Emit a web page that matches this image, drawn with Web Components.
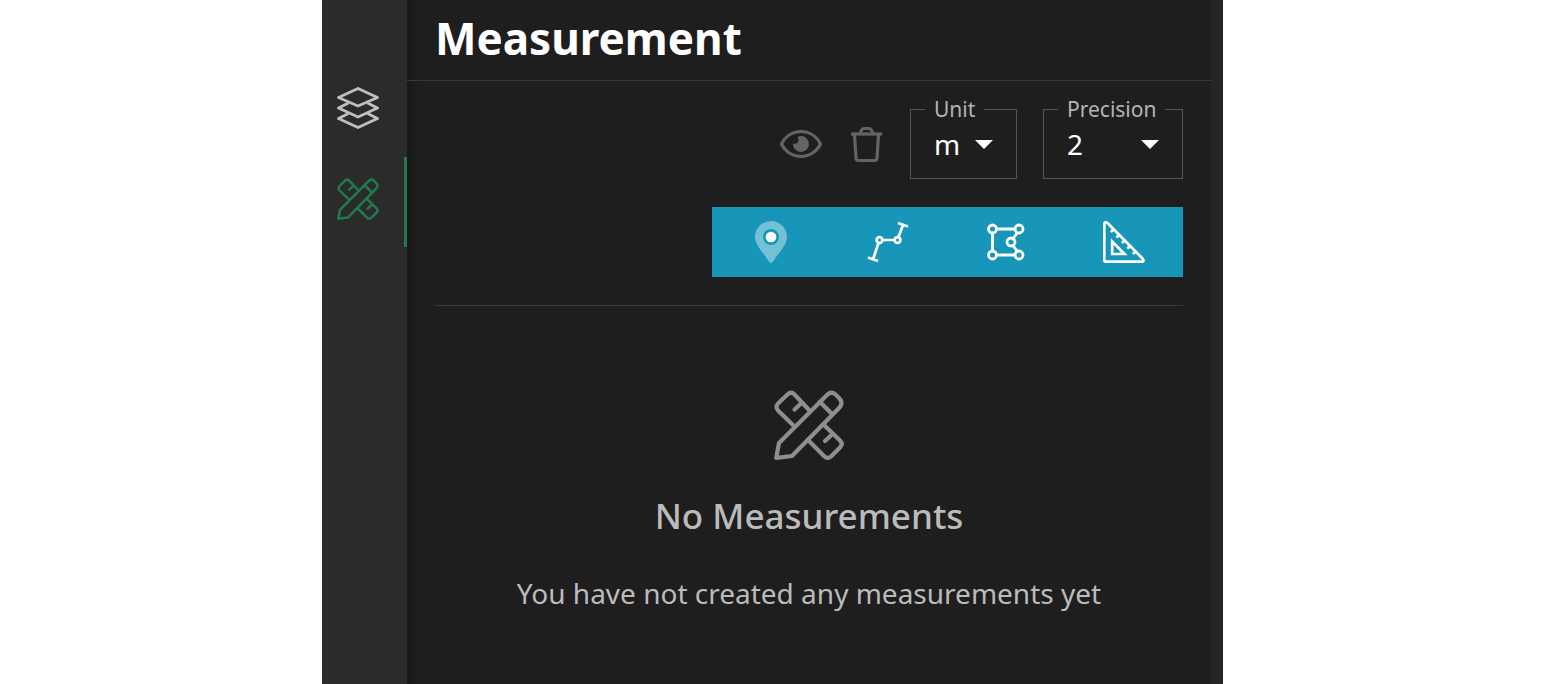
<!DOCTYPE html>
<html lang="en">
<head>
<meta charset="utf-8">
<title>Measurement</title>
<style>
  body {
    margin: 0;
    min-height: 100vh;
    display: grid;
    grid-template-columns: 322fr 901fr 324fr;
    background: #fff;
    font-family: "Noto Sans", "Open Sans", sans-serif;
  }
  app-shell {
    grid-column: 2;
  }
</style>
</head>
<body>
<app-shell>
  <side-tab slot="tabs" icon="layers" label="Layers"></side-tab>
  <side-tab slot="tabs" icon="measure" label="Measurement" active></side-tab>
  <measure-panel></measure-panel>
</app-shell>

<script>
const ICONS = {
  layers: `<g stroke-width="2.8">
    <path d="M21 1.5 40.5 10.5 21 19 1.5 10.5Z"/>
    <path d="M10.5 16.5 1.5 21 21 30 40.5 21 31.5 16.5"/>
    <path d="M10.5 27 1.5 31.5 21 40.5 40.5 31.5 31.5 27"/></g>`,
  measure: `<g transform="scale(.6)" stroke-width="4.2">
    <path d="M36 21 20.5 4.5Q17 1 13.5 4.5L4 13.5Q1 17 4 20.5L20 36"/>
    <path d="M27.5 13 20.5 19.5"/>
    <path d="M2.2 67.8 5 53 53.5 4.5Q57.5 1 61.500 4.500L65.500 8.500Q69.500 13 65.500 17.500L18 66Z"/>
    <path d="M46 12 58 24"/>
    <path d="M50 35 66 50.5Q69.500 54 66 57.500L57 66.500Q53.500 69.500 50 66L34 50"/>
    <path d="M58 44.5 51 51"/></g>`,
  eye: `<path stroke-width="3.2" d="M1.5 21C5.5 13 13 8.500 21 8.500S36.500 13 40.500 21C36.500 29 29 33.500 21 33.500S5.500 29 1.500 21Z"/>
    <path fill="currentColor" stroke="none" d="M21 13A8 8 0 1 1 13 20.500C16 21.500 18.500 19.500 18.500 17.500 18.500 16 18 15 17.500 14A8 8 0 0 1 21 13Z"/>`,
  trash: `<g stroke-width="3.2"><path stroke-linecap="butt" d="M6 11H37"/>
    <path d="M15 10 17 6.500Q17.500 5.500 19 5.500H24Q25.500 5.500 26 6.500L28 10"/>
    <path d="M9.500 12 11 35Q11 37.500 13.500 37.500H29.500Q32 37.500 32 35L33.500 12"/></g>`,
  point: `<path fill="currentColor" stroke="none" fill-rule="evenodd" opacity=".4" d="M21 0A16 16 0 0 1 37 16C37 23 31 29 23 40.500Q21 43.500 19 40.500C11 29 5 23 5 16A16 16 0 0 1 21 0ZM21 8A8 8 0 1 0 21 24A8 8 0 1 0 21 8Z"/>
    <circle cx="21" cy="16" r="5.3" fill="currentColor" stroke="none"/>`,
  line: `<g stroke-width="2.7" stroke-linecap="butt"><path d="M31 2 41 5.500M36 4 31.500 16M27.500 19H15.500M11.500 22 6 38.500M1 36.500 11 40"/>
    <circle cx="30.500" cy="19" r="2.900"/><circle cx="12.500" cy="19" r="2.900"/></g>`,
  area: `<g stroke-width="2.8"><path d="M11.500 8H30M11.500 34H30M7.500 12V30M32 12 28 18M28 24.500 32 30"/>
    <circle cx="7.500" cy="8" r="4"/><circle cx="34" cy="8" r="4"/><circle cx="7.500" cy="34" r="4"/>
    <circle cx="34" cy="34" r="4"/><circle cx="26" cy="21" r="4"/></g>`,
  angle: `<g stroke-width="2.7"><path d="M1.300 3Q1.300 1.300 2.500 1.300T5 2.500L39.500 37.500Q41 39.500 40.200 40.200T38 40.700H3Q1.300 40.700 1.300 39Z"/>
    <path stroke-linejoin="miter" d="M9.200 20.500V33H21.500Z"/>
    <path d="M10.500 8.500 8.700 10.300M16 14 14.200 15.800M21.500 19.500 19.700 21.300M27 25 25.200 26.800M32.500 30.500 30.700 32.300"/></g>`
};

class AppIcon extends HTMLElement {
  constructor() {
    super();
    this.attachShadow({ mode: 'open' });
  }

  connectedCallback() {
    this.shadowRoot.innerHTML = `
      <style>
        :host { display: block; width: 42px; height: 42px; }
        svg { display: block; width: 100%; height: 100%; }
      </style>
      <svg viewBox="0 0 42 42" fill="none" stroke="currentColor" stroke-linecap="round"
        stroke-linejoin="round" aria-hidden="true">${ICONS[this.getAttribute('name')]}</svg>
    `;
  }
}

class AppShell extends HTMLElement {
  constructor() {
    super();
    this.attachShadow({ mode: 'open' });
    this.shadowRoot.innerHTML = `
      <style>
        :host {
          display: flex;
          background: #1e1e1e;
        }
        nav {
          flex: none;
          width: 85px;
          padding-top: 66px;
          box-sizing: border-box;
          display: flex;
          flex-direction: column;
          gap: 1px;
          background: #2b2b2b;
        }
        main {
          flex: 1;
          min-width: 0;
          border-right: 12px solid #262626;
          background: linear-gradient(to right, #191919, #1e1e1e 14px);
        }
      </style>
      <nav><slot name="tabs"></slot></nav>
      <main><slot></slot></main>
    `;
  }
}

class SideTab extends HTMLElement {
  constructor() {
    super();
    this.attachShadow({ mode: 'open' });
  }

  connectedCallback() {
    this.shadowRoot.innerHTML = `
      <style>
        :host { display: block; }
        button {
          display: block;
          width: 100%;
          margin: 0;
          padding: 21px 0 27px 15px;
          border: 0;
          border-right: 3px solid transparent;
          background: none;
          color: #bfbfbf;
          cursor: pointer;
        }
        :host([active]) button {
          color: #20794f;
          border-right-color: #20794f;
        }
      </style>
      <button type="button" aria-label="${this.getAttribute('label')}">
        <app-icon name="${this.getAttribute('icon')}"></app-icon>
      </button>
    `;
  }
}

class IconButton extends HTMLElement {
  constructor() {
    super();
    this.attachShadow({ mode: 'open' });
  }

  connectedCallback() {
    this.shadowRoot.innerHTML = `
      <style>
        :host { display: block; }
        button {
          display: flex;
          align-items: center;
          justify-content: center;
          width: 100%;
          height: 70px;
          margin: 0;
          padding: 0;
          border: 0;
          background: none;
          color: inherit;
          cursor: pointer;
        }
        button:disabled { cursor: default; }
      </style>
      <button type="button" aria-label="${this.getAttribute('label')}"
        ${this.hasAttribute('disabled') ? 'disabled' : ''}>
        <app-icon name="${this.getAttribute('icon')}"></app-icon>
      </button>
    `;
  }
}

class SelectField extends HTMLElement {
  constructor() {
    super();
    this.attachShadow({ mode: 'open' });
  }

  connectedCallback() {
    const value = this.getAttribute('value');
    const options = this.getAttribute('options').split(',');
    this.shadowRoot.innerHTML = `
      <style>
        :host { display: block; }
        fieldset {
          min-width: 0;
          margin: 0;
          padding: 0 14px;
          border: 1px solid #555;
        }
        legend {
          padding: 0 9px;
          color: #b4b4b4;
          font-size: 21px;
          line-height: 22px;
        }
        .control {
          display: grid;
          align-items: center;
          height: 58px;
          padding-bottom: 10px;
          box-sizing: border-box;
        }
        select, svg { grid-area: 1 / 1; }
        select {
          appearance: none;
          width: 100%;
          margin: 0;
          padding: 0 0 0 9px;
          border: 0;
          background: transparent;
          color: #fff;
          font: 28px/40px "Noto Sans", "Open Sans", sans-serif;
          cursor: pointer;
        }
        option { background: #1e1e1e; }
        svg {
          justify-self: end;
          width: 18px;
          height: 9px;
          margin-right: 9px;
          pointer-events: none;
        }
      </style>
      <fieldset>
        <legend><label for="field">${this.getAttribute('label')}</label></legend>
        <div class="control">
          <select id="field">
            ${options.map(o => `<option${o === value ? ' selected' : ''}>${o}</option>`).join('')}
          </select>
          <svg viewBox="0 0 18 9" fill="#fff" aria-hidden="true"><path d="M0 0H18L9 9Z"/></svg>
        </div>
      </fieldset>
    `;
  }
}

class EmptyState extends HTMLElement {
  constructor() {
    super();
    this.attachShadow({ mode: 'open' });
    this.shadowRoot.innerHTML = `
      <style>
        :host {
          display: flex;
          flex-direction: column;
          align-items: center;
          gap: 33px;
          padding: 84px 0 70px;
          text-align: center;
          color: #bbb;
        }
        app-icon { width: 70px; height: 70px; color: #8e8e8e; }
        h2 { margin: 0; font-size: 35px; line-height: 46px; font-weight: 500; }
        p { margin: 0; font-size: 28px; line-height: 42px; }
      </style>
      <app-icon name="measure"></app-icon>
      <h2><slot name="title"></slot></h2>
      <p><slot></slot></p>
    `;
  }
}

class MeasurePanel extends HTMLElement {
  constructor() {
    super();
    this.attachShadow({ mode: 'open' });
    this.shadowRoot.innerHTML = `
      <style>
        :host { display: block; }
        header {
          padding: 8px 28px 12px;
          border-bottom: 1px solid #3a3a3a;
        }
        h1 {
          margin: 0;
          color: #fff;
          font-size: 44px;
          line-height: 60px;
          font-weight: 700;
        }
        .content { padding: 17px 28px 0; }
        .controls {
          display: flex;
          flex-direction: column;
          align-items: flex-end;
          gap: 28px;
          padding-bottom: 28px;
          border-bottom: 1px solid #3a3a3a;
        }
        .options {
          display: flex;
          align-items: flex-end;
          gap: 23px;
          color: #646464;
        }
        .fields {
          display: flex;
          gap: 26px;
        }
        .unit { width: 107px; }
        .precision { width: 140px; }
        .tools {
          display: grid;
          grid-template-columns: repeat(4, 1fr);
          width: 63%;
          color: #fff;
          background: #1896b9;
        }
      </style>
      <header><h1>Measurement</h1></header>
      <div class="content">
        <div class="controls">
          <div class="options">
            <icon-button icon="eye" label="Toggle visibility" disabled></icon-button>
            <icon-button icon="trash" label="Delete all" disabled></icon-button>
            <div class="fields">
              <select-field class="unit" label="Unit" options="mm,cm,m,km" value="m"></select-field>
              <select-field class="precision" label="Precision" options="0,1,2,3,4" value="2"></select-field>
            </div>
          </div>
          <div class="tools" role="toolbar" aria-label="Measurement tools">
            <icon-button icon="point" label="Point"></icon-button>
            <icon-button icon="line" label="Distance"></icon-button>
            <icon-button icon="area" label="Area"></icon-button>
            <icon-button icon="angle" label="Triangle"></icon-button>
          </div>
        </div>
        <empty-state>
          <span slot="title">No Measurements</span>
          You have not created any measurements yet
        </empty-state>
      </div>
    `;
  }
}

customElements.define('app-icon', AppIcon);
customElements.define('icon-button', IconButton);
customElements.define('select-field', SelectField);
customElements.define('side-tab', SideTab);
customElements.define('empty-state', EmptyState);
customElements.define('measure-panel', MeasurePanel);
customElements.define('app-shell', AppShell);
</script>
</body>
</html>
